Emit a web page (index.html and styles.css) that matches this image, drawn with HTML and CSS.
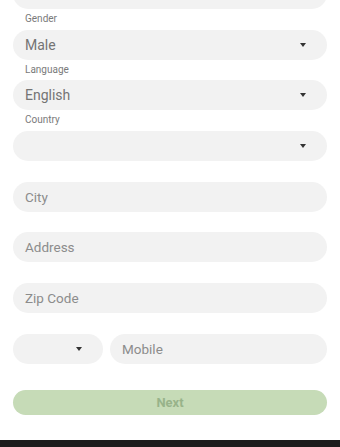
FILE: index.html
```html
<!DOCTYPE html>
<html>
<head>
<meta charset="utf-8">
<link rel="stylesheet" href="styles.css">
</head>
<body>
<div class="page">
  <form class="form">
    <div class="field top"></div>
    <div class="group">
      <div class="label">Gender</div>
      <div class="field select"><span class="value">Male</span><span class="caret"></span></div>
    </div>
    <div class="group">
      <div class="label">Language</div>
      <div class="field select"><span class="value">English</span><span class="caret"></span></div>
    </div>
    <div class="group">
      <div class="label">Country</div>
      <div class="field select"><span class="value"></span><span class="caret"></span></div>
    </div>
    <div class="group">
      <div class="label"></div>
      <div class="field"><span class="ph">City</span></div>
    </div>
    <div class="group">
      <div class="label"></div>
      <div class="field"><span class="ph">Address</span></div>
    </div>
    <div class="group">
      <div class="label"></div>
      <div class="field"><span class="ph">Zip Code</span></div>
    </div>
    <div class="group">
      <div class="label"></div>
      <div class="phone">
        <div class="field select code"><span class="value"></span><span class="caret"></span></div>
        <div class="field mobile"><span class="ph">Mobile</span></div>
      </div>
    </div>
    <div class="btnwrap">
      <div class="next">Next</div>
    </div>
  </form>
  <div class="navbar"></div>
</div>
</body>
</html>
```
FILE: styles.css
```css
html, body {
  margin: 0;
  padding: 0;
  background: #ffffff;
  font-family: Roboto, "Noto Sans", "Liberation Sans", sans-serif;
  overflow: hidden;
}
.page {
  width: 340px;
  height: 447px;
  display: flex;
  flex-direction: column;
  overflow: hidden;
}
.form {
  flex: 1;
  padding: 0 13px 0 13px;
  display: flex;
  flex-direction: column;
}
.field {
  height: 30px;
  border-radius: 15px;
  background: #f2f2f2;
  display: flex;
  align-items: center;
  padding: 0 12px;
  box-sizing: border-box;
  flex-shrink: 0;
}
.field.top {
  margin-top: -21px;
}
.group {
  display: flex;
  flex-direction: column;
}
.label {
  height: 20.67px;
  box-sizing: border-box;
  padding: 4px 0 0 12px;
  font-size: 10px;
  line-height: 12px;
  color: #7a7a7a;
}
.value {
  flex: 1;
  font-size: 14px;
  color: #747474;
}
.ph {
  font-size: 13.5px;
  color: #8c8c8c;
}
.caret {
  width: 0;
  height: 0;
  border-left: 3.5px solid transparent;
  border-right: 3.5px solid transparent;
  border-top: 4.5px solid #333333;
  margin-right: 9px;
}
.phone {
  display: flex;
  gap: 7px;
}
.code {
  width: 90px;
}
.mobile {
  flex: 1;
}
.btnwrap {
  padding-top: 26px;
}
.next {
  height: 25px;
  border-radius: 12.5px;
  background: #c6dbb7;
  color: #98b38a;
  font-weight: bold;
  font-size: 13px;
  display: flex;
  align-items: center;
  justify-content: center;
}
.navbar {
  height: 7px;
  background: #1c1c1c;
  flex-shrink: 0;
}
```
